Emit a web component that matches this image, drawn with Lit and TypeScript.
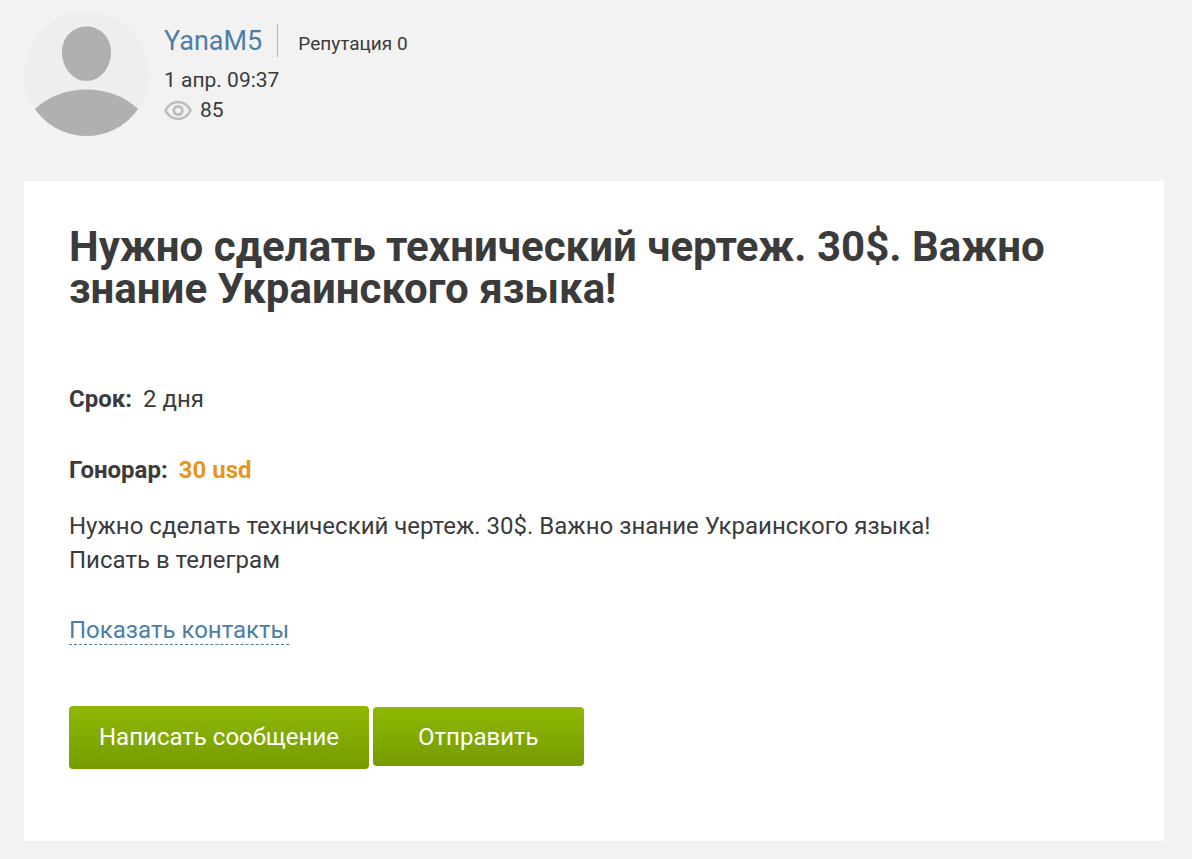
import { LitElement, html, css } from "lit";
import { customElement } from "lit/decorators.js";

@customElement("app-root")
export class AppRoot extends LitElement {
  static styles = css`
    * { box-sizing: border-box; }
    :host {
      display: block;
      min-height: 100vh;
      padding: 11px 28px 18px 24px;
      background: #f2f2f2;
      color: #3b3b3b;
      font-family: Roboto, sans-serif;
      font-size: 24px;
      line-height: 34px;
    }
    a { color: #4c7ea8; text-decoration: none; }
    .author { display: flex; gap: 15px; margin-bottom: 45px; }
    .avatar { display: block; width: 125px; height: 125px; }
    .info { padding-top: 13px; font-size: 21px; line-height: 30px; }
    .top { display: flex; align-items: center; height: 33px; margin-bottom: 8px; }
    .name { height: 33px; padding-right: 15px; border-right: 1px solid #b5b5b5; font-size: 27px; line-height: 35px; }
    .rep { padding: 6px 0 0 20px; font-size: 19px; }
    .views { display: flex; align-items: center; gap: 7px; }
    .eye { display: block; width: 29px; height: 20px; }
    .card { padding: 45px 45px 72px; background: #fff; }
    h1 { margin: 0 0 72px; font-size: 42px; line-height: 42px; font-weight: 700; }
    .row { display: flex; gap: 11px; margin: 0 0 37px; }
    .fee { margin-bottom: 22px; }
    .price { color: #e8951f; }
    p { margin: 0 0 36px; }
    .contacts { display: inline-block; line-height: 28px; border-bottom: 1px dashed #4c7ea8; }
    .actions { display: flex; align-items: flex-start; gap: 4px; margin-top: 59px; }
    button {
      height: 63px; padding: 0 30px 2px; border: 0; border-radius: 4px;
      color: #fff; background: linear-gradient(#8fb804, #769b00);
      font: 24px/34px Roboto, sans-serif; cursor: pointer;
    }
    .send { height: 59px; margin-top: 1px; padding: 0 45px; }
  `;

  render() {
    return html`
      <header class="author">
        <svg class="avatar" viewBox="0 0 125 125" aria-hidden="true">
          <defs><clipPath id="round"><circle cx="62.5" cy="62.5" r="62.5" /></clipPath></defs>
          <g clip-path="url(#round)">
            <rect width="125" height="125" fill="#eeeef0" />
            <path d="M62.5 15.5C76 15.5 87 26 87 41C87 57 76 70 62.5 70C49 70 38 57 38 41C38 26 49 15.5 62.5 15.5Z" fill="#b0b0b0" />
            <path d="M11 98C38 72 87 72 114 98V125H11Z" fill="#b0b0b0" />
          </g>
        </svg>
        <div class="info">
          <div class="top"><a class="name" href="#">YanaM5</a><span class="rep">Репутация 0</span></div>
          <div>1 апр. 09:37</div>
          <div class="views">
            <svg class="eye" viewBox="0 0 29 20" fill="none" stroke="#bdbdbd" aria-hidden="true">
              <path d="M1.5 10.5C7.5 -.7 20.500 -.7 26.700 10.5C20.500 21.700 7.500 21.700 1.500 10.500Z" stroke-width="2.500" stroke-linejoin="round" />
              <circle cx="14.100" cy="10.500" r="4.200" stroke-width="2.800" />
            </svg>
            <span>85</span>
          </div>
        </div>
      </header>
      <main class="card">
        <h1>Нужно сделать технический чертеж. 30$. Важно знание Украинского языка!</h1>
        <div class="row"><b>Срок:</b><span>2 дня</span></div>
        <div class="row fee"><b>Гонорар:</b><b class="price">30 usd</b></div>
        <p>Нужно сделать технический чертеж. 30$. Важно знание Украинского языка!<br />Писать в телеграм</p>
        <a class="contacts" href="#">Показать контакты</a>
        <div class="actions">
          <button type="button">Написать сообщение</button>
          <button type="button" class="send">Отправить</button>
        </div>
      </main>
    `;
  }
}
